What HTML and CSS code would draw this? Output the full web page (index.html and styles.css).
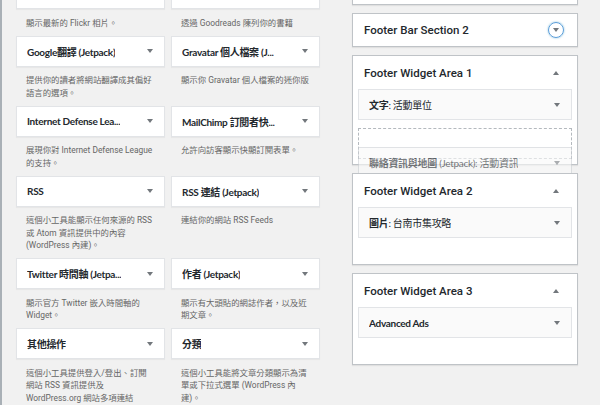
FILE: index.html
```html
<!DOCTYPE html>
<html lang="zh-Hant">
<head>
    <meta charset="UTF-8">
    <meta name="viewport" content="width=device-width, initial-scale=1.0">
    <title>小工具</title>
    <link rel="stylesheet" href="styles.css">
</head>
<body>
    <div class="screen">
        <div class="widget-list">
            <!-- 第一列只露出底部，標題在畫面外 -->
            <div class="avail-widget">
                <div class="widget-top"><h3 class="widget-title"></h3><span class="toggle"></span></div>
                <p class="widget-desc">顯示最新的 Flickr 相片。</p>
            </div>
            <div class="avail-widget">
                <div class="widget-top"><h3 class="widget-title"></h3><span class="toggle"></span></div>
                <p class="widget-desc">透過 Goodreads 陳列你的書籍</p>
            </div>

            <div class="avail-widget">
                <div class="widget-top"><h3 class="widget-title">Google翻譯 (Jetpack)</h3><span class="toggle"></span></div>
                <p class="widget-desc">提供你的讀者將網站翻譯成其偏好語言的選項。</p>
            </div>
            <div class="avail-widget">
                <div class="widget-top"><h3 class="widget-title">Gravatar 個人檔案 (J...</h3><span class="toggle"></span></div>
                <p class="widget-desc">顯示你 Gravatar 個人檔案的迷你版</p>
            </div>

            <div class="avail-widget">
                <div class="widget-top"><h3 class="widget-title">Internet Defense Lea...</h3><span class="toggle"></span></div>
                <p class="widget-desc">展現你對 Internet Defense League 的支持。</p>
            </div>
            <div class="avail-widget">
                <div class="widget-top"><h3 class="widget-title">MailChimp 訂閱者快...</h3><span class="toggle"></span></div>
                <p class="widget-desc">允許向訪客顯示快顯訂閱表單。</p>
            </div>

            <div class="avail-widget">
                <div class="widget-top"><h3 class="widget-title">RSS</h3><span class="toggle"></span></div>
                <p class="widget-desc">這個小工具能顯示任何來源的 RSS 或 Atom 資訊提供中的內容 (WordPress 內建)。</p>
            </div>
            <div class="avail-widget">
                <div class="widget-top"><h3 class="widget-title">RSS 連結 (Jetpack)</h3><span class="toggle"></span></div>
                <p class="widget-desc">連結你的網站 RSS Feeds</p>
            </div>

            <div class="avail-widget">
                <div class="widget-top"><h3 class="widget-title">Twitter 時間軸 (Jetpa...</h3><span class="toggle"></span></div>
                <p class="widget-desc">顯示官方 Twitter 嵌入時間軸的 Widget。</p>
            </div>
            <div class="avail-widget">
                <div class="widget-top"><h3 class="widget-title">作者 (Jetpack)</h3><span class="toggle"></span></div>
                <p class="widget-desc">顯示有大頭貼的網誌作者，以及近期文章。</p>
            </div>

            <div class="avail-widget">
                <div class="widget-top"><h3 class="widget-title">其他操作</h3><span class="toggle"></span></div>
                <p class="widget-desc">這個小工具提供登入/登出、訂閱網站 RSS 資訊提供及 WordPress.org 網站多項連結</p>
            </div>
            <div class="avail-widget">
                <div class="widget-top"><h3 class="widget-title">分類</h3><span class="toggle"></span></div>
                <p class="widget-desc">這個小工具能將文章分類顯示為清單或下拉式選單 (WordPress 內建)。</p>
            </div>
        </div>

        <div class="sidebars">
            <div class="sidebar closed">
                <div class="sidebar-name"><h2></h2><span class="toggle"></span></div>
            </div>
            <div class="sidebar closed">
                <div class="sidebar-name"><h2>Footer Bar Section 2</h2><span class="toggle focused"></span></div>
            </div>
            <div class="sidebar dragging-over">
                <div class="sidebar-name"><h2>Footer Widget Area 1</h2><span class="toggle up"></span></div>
                <div class="sidebar-widgets">
                    <div class="widget-top in-sidebar"><h3 class="widget-title">文字<span class="in-title">: 活動單位</span></h3><span class="toggle"></span></div>
                    <div class="placeholder"></div>
                </div>
                <div class="widget-top in-sidebar helper"><h3 class="widget-title">聯絡資訊與地圖<span class="in-title"> (Jetpack): 活動資訊</span></h3><span class="toggle"></span></div>
            </div>
            <div class="sidebar">
                <div class="sidebar-name"><h2>Footer Widget Area 2</h2><span class="toggle up"></span></div>
                <div class="sidebar-widgets">
                    <div class="widget-top in-sidebar"><h3 class="widget-title">圖片<span class="in-title">: 台南市集攻略</span></h3><span class="toggle"></span></div>
                </div>
            </div>
            <div class="sidebar">
                <div class="sidebar-name"><h2>Footer Widget Area 3</h2><span class="toggle up"></span></div>
                <div class="sidebar-widgets">
                    <div class="widget-top in-sidebar"><h3 class="widget-title">Advanced Ads</h3><span class="toggle"></span></div>
                </div>
            </div>
        </div>
    </div>
</body>
</html>
```

FILE: styles.css
```css
body {
    margin: 0;
    background-color: #f1f1f1;
    font-family: Roboto, "Noto Sans CJK TC", sans-serif;
    color: #23282d;
    height: 405px;
    overflow: hidden;
}

.screen {
    display: flex;
    align-items: flex-start;
    border-left: 2px solid #a9b0b6;
    min-height: 405px;
    box-sizing: border-box;
}

/* 可用的小工具 */
.widget-list {
    display: grid;
    grid-template-columns: 149px 149px;
    column-gap: 6px;
    margin: -22px 0 0 14px;
}

.widget-top {
    display: flex;
    align-items: center;
    justify-content: space-between;
    height: 31px;
    box-sizing: border-box;
    padding: 0 6px 0 10px;
    background-color: white;
    border: 1px solid #e2e4e7;
    box-shadow: 0 1px 1px rgba(0, 0, 0, 0.04);
}

.widget-title {
    margin: 0;
    font-family: Lato, "Noto Sans CJK TC", sans-serif;
    font-size: 10px;
    font-weight: 700;
    letter-spacing: -0.3px;
    white-space: nowrap;
    overflow: hidden;
}

.in-title {
    font-weight: 400;
}

.widget-desc {
    margin: 0;
    padding: 7.5px 10px 6.5px 10px;
    font-size: 8.4px;
    line-height: 12.5px;
    color: #666;
}

.toggle {
    flex: none;
    width: 16px;
    height: 16px;
    box-sizing: border-box;
    display: flex;
    align-items: center;
    justify-content: center;
}

.toggle::after {
    content: '';
    border-left: 3px solid transparent;
    border-right: 3px solid transparent;
    border-top: 4px solid #72777c;
}

.toggle.up::after {
    border-top: none;
    border-bottom: 4px solid #72777c;
}

.toggle.focused {
    border: 1px solid #5b9dd9;
    border-radius: 50%;
    box-shadow: 0 0 2px rgba(30, 140, 190, 0.6);
}

/* 側邊欄 */
.sidebars {
    width: 226px;
    margin: -29px 0 0 32px;
    display: flex;
    flex-direction: column;
    gap: 8px;
}

.sidebar {
    position: relative;
    background-color: white;
    border: 1px solid #bfc3c7;
    box-shadow: 0 1px 1px rgba(0, 0, 0, 0.07);
    padding: 0 5px 26px;
}

.sidebar.closed {
    padding: 0;
}

.sidebar.dragging-over {
    padding-bottom: 5px;
}

.sidebar-name {
    display: flex;
    align-items: center;
    justify-content: space-between;
    height: 33px;
    padding: 0 8px 0 6px;
}

.sidebar.closed .sidebar-name {
    height: 32px;
    padding: 0 13px 0 11px;
}

.sidebar-name h2 {
    margin: 0;
    font-size: 11.5px;
    font-weight: 500;
}

.sidebar-widgets {
    display: flex;
    flex-direction: column;
    gap: 8px;
}

.widget-top.in-sidebar {
    background-color: #fafafa;
    box-shadow: none;
}

.placeholder {
    height: 31px;
    box-sizing: border-box;
    border: 1px dashed #b4b9be;
}

.helper {
    position: absolute;
    top: 91px;
    left: 5px;
    right: 5px;
    opacity: 0.6;
    border-color: #ccd0d4;
}
```
